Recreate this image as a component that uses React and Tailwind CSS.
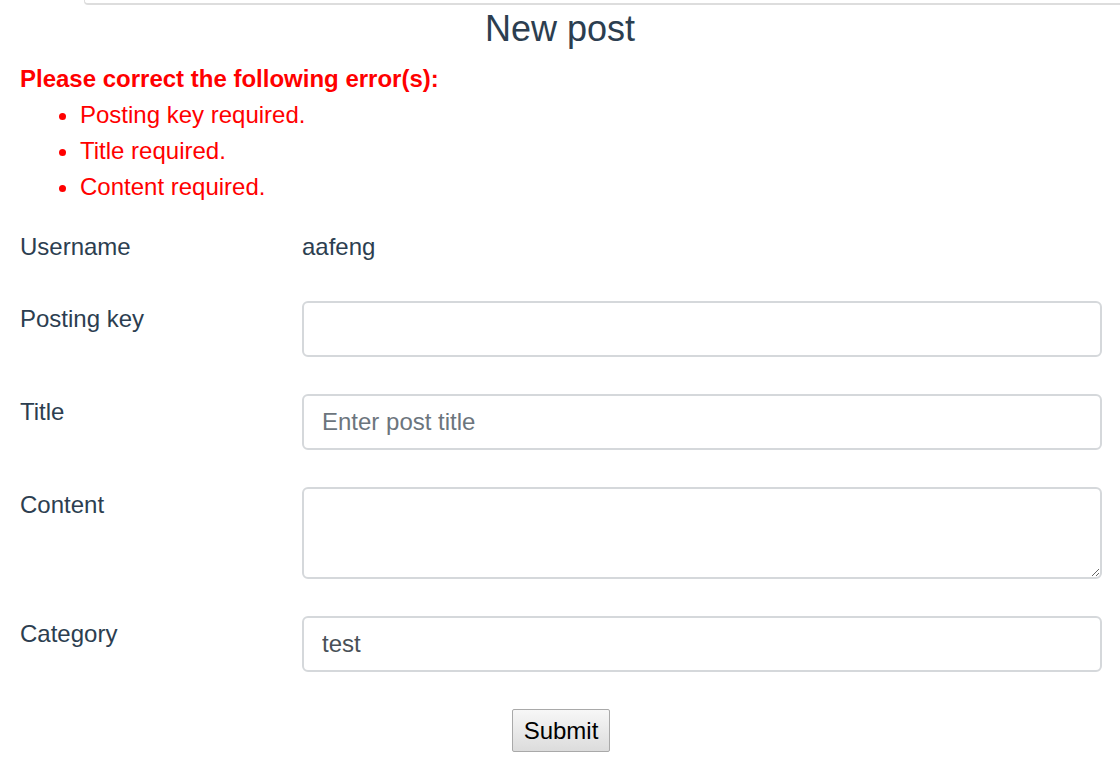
import React from 'react';

const errors = ['Posting key required.', 'Title required.', 'Content required.'];

const inputClass =
  'w-full h-[56px] px-[18px] border-2 border-[#d5d8db] rounded-[6px] bg-white text-[24px] text-[#495057] placeholder:text-[#6c757d] outline-none';

const Row = ({ label, className = '', children }) => (
  <div className={`flex items-start ${className}`}>
    <label className="w-[282px] shrink-0 leading-[36px]">{label}</label>
    <div className="flex-1">{children}</div>
  </div>
);

export default function App() {
  return (
    <div
      className="min-h-screen bg-white text-[#2c3e50] text-[24px]"
      style={{ fontFamily: '"Liberation Sans", Arial, sans-serif' }}
    >
      {/* top nav box edge */}
      <div className="h-[5px] ml-[84px] border-l border-b-2 border-[#dddddd] rounded-bl-[4px]" />

      <h2 className="text-center text-[36px] leading-[44px] mt-[2px]">New post</h2>

      <div className="pl-[20px] pr-[18px]">
        {/* Errors */}
        <div className="mt-[10px] text-[#ff0000]">
          <p className="font-bold leading-[36px]">Please correct the following error(s):</p>
          <ul className="list-disc pl-[60px] mb-[24px]">
            {errors.map((e) => (
              <li key={e} className="leading-[36px]">{e}</li>
            ))}
          </ul>
        </div>

        {/* Form */}
        <form className="flex flex-col gap-[37px]" onSubmit={(e) => e.preventDefault()}>
          <Row label="Username" className="h-[35px]">
            <div className="leading-[36px]">aafeng</div>
          </Row>
          <Row label="Posting key">
            <input type="password" className={inputClass} />
          </Row>
          <Row label="Title">
            <input type="text" placeholder="Enter post title" className={inputClass} />
          </Row>
          <Row label="Content">
            <textarea className="w-full h-[92px] px-[18px] py-[9px] border-2 border-[#d5d8db] rounded-[6px] bg-white text-[24px] text-[#495057] outline-none block" />
          </Row>
          <Row label="Category">
            <input type="text" defaultValue="test" className={inputClass} />
          </Row>
          <div className="flex justify-center">
            <button
              type="submit"
              className="w-[98px] h-[43px] border border-[#a9a9a9] rounded-[2px] bg-gradient-to-b from-[#f7f7f7] to-[#dcdcdc] text-black text-[24px]"
            >
              Submit
            </button>
          </div>
        </form>
      </div>
    </div>
  );
}
